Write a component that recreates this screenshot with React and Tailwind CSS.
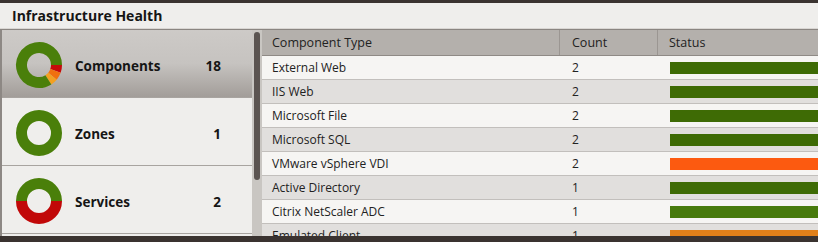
import React from "react";

const rows = [
  ["External Web", 2, "#3e6b05"],
  ["IIS Web", 2, "#3e6b05"],
  ["Microsoft File", 2, "#3e6b05"],
  ["Microsoft SQL", 2, "#3e6b05"],
  ["VMware vSphere VDI", 2, "#fc5a10"],
  ["Active Directory", 1, "#3e6b05"],
  ["Citrix NetScaler ADC", 1, "#477a0c"],
  ["Emulated Client", 1, "#e0801a"],
];

function arc(cx, cy, r, a0, a1) {
  const x0 = cx + r * Math.cos(a0), y0 = cy + r * Math.sin(a0);
  const x1 = cx + r * Math.cos(a1), y1 = cy + r * Math.sin(a1);
  const large = a1 - a0 > Math.PI ? 1 : 0;
  return `M${x0} ${y0} A${r} ${r} 0 ${large} 1 ${x1} ${y1}`;
}

function Donut({ segs }) {
  let a = 0;
  return (
    <svg width="48" height="48" viewBox="0 0 48 48">
      {segs.map(([f, c], i) => {
        const a0 = a;
        a += f * Math.PI * 2;
        if (f >= 1) return <circle key={i} cx="24" cy="24" r="17.5" fill="none" stroke={c} strokeWidth="11" />;
        return <path key={i} d={arc(24, 24, 17.5, a0, a)} fill="none" stroke={c} strokeWidth="11" />;
      })}
    </svg>
  );
}

function Item({ label, count, segs, selected }) {
  return (
    <div
      className={
        "flex items-center h-[68px] border-b border-[#a8a4a0] pl-[13px] " +
        (selected
          ? "bg-gradient-to-b from-[#cdcac7] via-[#c6c3c0] to-[#a29d99]"
          : "bg-[#efeeec]")
      }
    >
      <div className="mt-[2px]"><Donut segs={segs} /></div>
      <div className="ml-[12px] mt-[5px] w-[116px] text-[13.5px] font-bold text-[#151515]">{label}</div>
      <div className="mt-[5px] w-[30px] text-right text-[13.5px] font-bold text-[#151515]">{count}</div>
    </div>
  );
}

export default function App() {
  return (
    <div className="w-[818px] h-[242px] overflow-hidden bg-[#3a3330] flex flex-col" style={{ fontFamily: '"Open Sans", "Noto Sans", sans-serif' }}>
      <div className="h-[3px] shrink-0" />
      <div className="h-[26px] shrink-0 bg-[#efeeec] flex items-center pl-[12px] text-[14px] font-bold text-[#151515] border-b border-[#d9d6d3]">
        Infrastructure Health
      </div>
      <div className="h-[1px] shrink-0 bg-[#8a8581]" />
      <div className="flex h-[206px] shrink-0 overflow-hidden">
        <div className="w-[252px] shrink-0 flex flex-col border-l-2 border-[#8d8884] bg-[#efeeec]">
          <Item label="Components" count="18" selected segs={[[0.055, "#c40a0a"], [0.055, "#f0700f"], [0.05, "#f3a020"], [0.84, "#4a7f0a"]]} />
          <Item label="Zones" count="1" segs={[[1, "#4a7f0a"]]} />
          <Item label="Services" count="2" segs={[[0.5, "#c10808"], [0.5, "#4a7f0a"]]} />
        </div>
        <div className="w-[10px] shrink-0 bg-[#c9c6c2] flex justify-center pt-[2px]">
          <div className="w-[6px] h-[148px] rounded-full bg-[#5b5451]" />
        </div>
        <div className="flex-1 bg-[#f6f5f3] text-[12px] text-[#222]">
          <div className="flex h-[26px] bg-[#b4b0ac] border-b border-[#8f8a86] items-center text-[12.5px]">
            <div className="w-[298px] pl-[10px] pt-[2px] border-r border-[#9b9692] h-full flex items-center">Component Type</div>
            <div className="w-[98px] pl-[12px] pt-[2px] border-r border-[#9b9692] h-full flex items-center">Count</div>
            <div className="flex-1 pl-[11px] pt-[2px] h-full flex items-center">Status</div>
          </div>
          {rows.map(([name, n, color], i) => (
            <div
              key={name}
              className={"flex h-[24px] items-center border-b border-[#c2bfbc] " + (i % 2 === 0 ? "bg-[#f6f5f3]" : "bg-[#e1dfdd]")}
            >
              <div className="w-[298px] pl-[10px]">{name}</div>
              <div className="w-[98px] pl-[12px]">{n}</div>
              <div className="flex-1 pl-[12px] h-full flex items-center">
                <div className="w-full h-[12px]" style={{ backgroundColor: color }} />
              </div>
            </div>
          ))}
        </div>
      </div>
    </div>
  );
}
